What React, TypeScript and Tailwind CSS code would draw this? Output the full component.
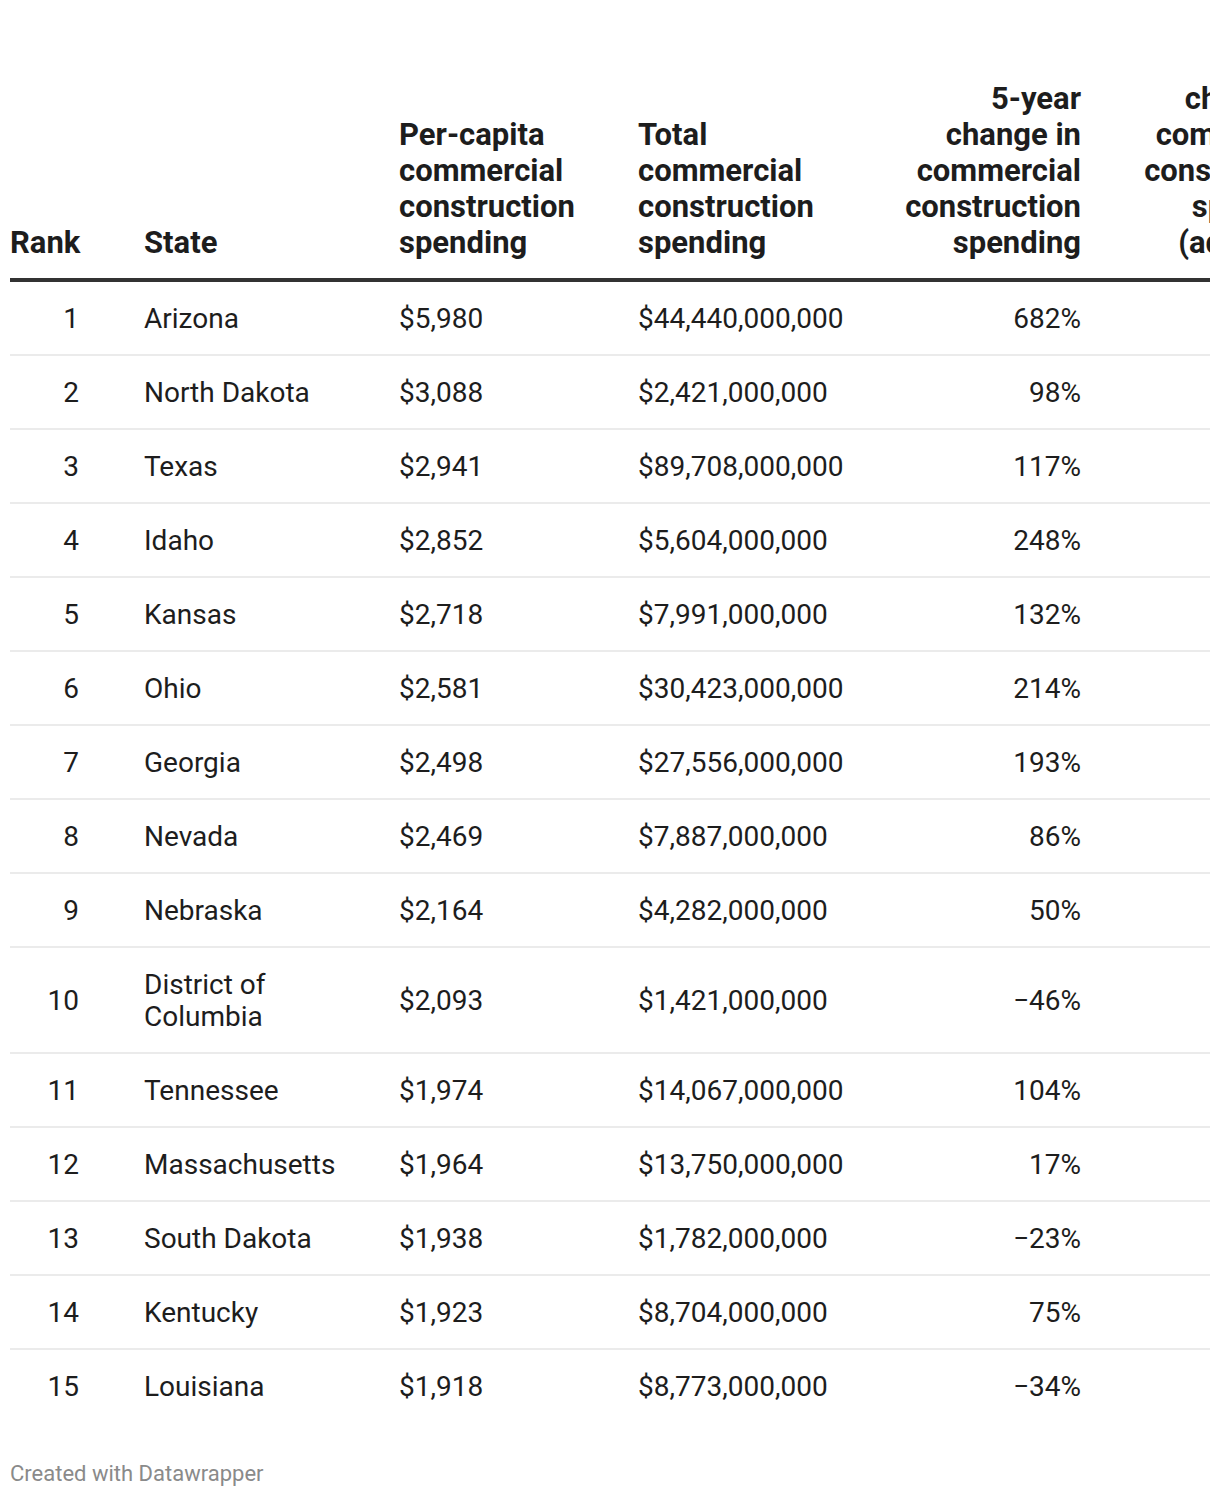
import React from "react";

const rows: [string, string, string, string, string, string][] = [
  ["1", "Arizona", "$5,980", "$44,440,000,000", "682%", "540%"],
  ["2", "North Dakota", "$3,088", "$2,421,000,000", "98%", "62%"],
  ["3", "Texas", "$2,941", "$89,708,000,000", "117%", "78%"],
  ["4", "Idaho", "$2,852", "$5,604,000,000", "248%", "185%"],
  ["5", "Kansas", "$2,718", "$7,991,000,000", "132%", "90%"],
  ["6", "Ohio", "$2,581", "$30,423,000,000", "214%", "157%"],
  ["7", "Georgia", "$2,498", "$27,556,000,000", "193%", "140%"],
  ["8", "Nevada", "$2,469", "$7,887,000,000", "86%", "52%"],
  ["9", "Nebraska", "$2,164", "$4,282,000,000", "50%", "23%"],
  ["10", "District of Columbia", "$2,093", "$1,421,000,000", "\u221246%", "\u221256%"],
  ["11", "Tennessee", "$1,974", "$14,067,000,000", "104%", "67%"],
  ["12", "Massachusetts", "$1,964", "$13,750,000,000", "17%", "\u22124%"],
  ["13", "South Dakota", "$1,938", "$1,782,000,000", "\u221223%", "\u221237%"],
  ["14", "Kentucky", "$1,923", "$8,704,000,000", "75%", "43%"],
  ["15", "Louisiana", "$1,918", "$8,773,000,000", "\u221234%", "\u221246%"],
];

const grid =
  "grid grid-cols-[70px_319px_239px_263px_180px_239px] w-[1310px]";

export default function App() {
  return (
    <div
      className="w-[1220px] bg-white px-[10px] pt-[81px] pb-[12px] text-[#1d1d1d]"
      style={{ fontFamily: "Roboto, 'Liberation Sans', sans-serif" }}
    >
      <div className="w-[1200px] overflow-hidden">
        <div
          className={`${grid} items-end border-b-4 border-[#333333] pb-[17px] text-[31px] font-bold leading-[36px]`}
        >
          <div className="text-left">Rank</div>
          <div className="pl-[64px] pr-[45px]">State</div>
          <div className="pr-[39px]">
            Per-capita commercial construction spending
          </div>
          <div className="pr-[43px]">
            Total commercial construction spending
          </div>
          <div className="text-right">
            5-year change in commercial construction spending
          </div>
          <div className="pl-[59px] text-right">
            change in commercial construction spending (adjusted)
          </div>
        </div>
        {rows.map((r, i) => (
          <div
            key={r[0]}
            className={`${grid} items-center pt-[21px] pb-[19px] text-[28px] leading-[32px] ${
              i < rows.length - 1 ? "border-b-2 border-[#ebebeb]" : ""
            }`}
          >
            <div className="pr-px text-right">{r[0]}</div>
            <div className="pl-[64px] pr-[45px]">{r[1]}</div>
            <div className="pr-[39px]">{r[2]}</div>
            <div className="pr-[43px]">{r[3]}</div>
            <div className="text-right">{r[4]}</div>
            <div className="pl-[59px] text-right">{r[5]}</div>
          </div>
        ))}
      </div>
      <div className="mt-[40px] text-[22px] leading-[24px] text-[#8a8a8a]">
        Created with Datawrapper
      </div>
    </div>
  );
}
